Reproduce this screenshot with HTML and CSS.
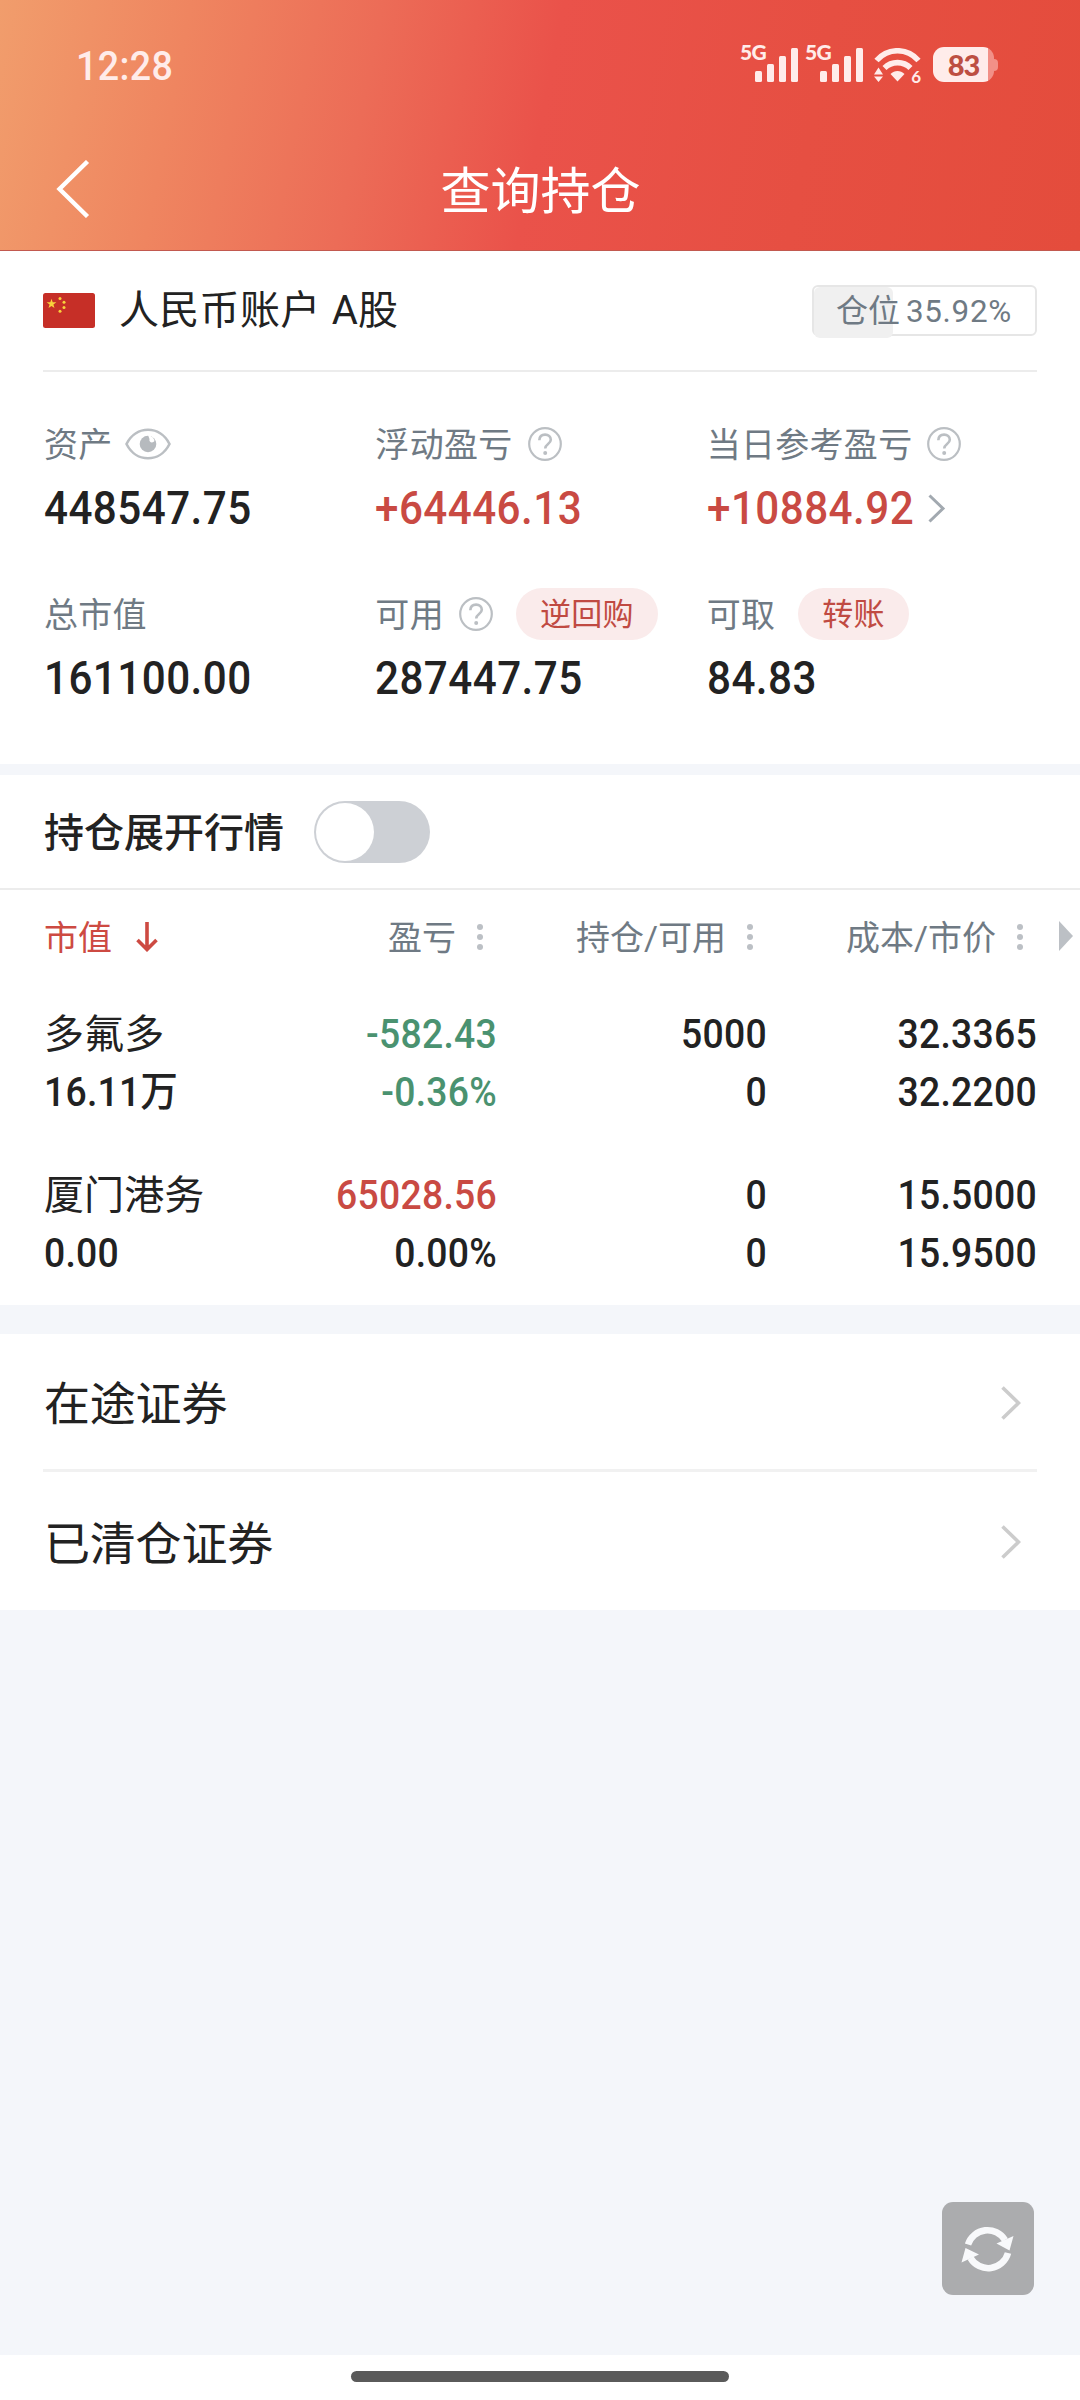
FILE: index.html
```html
<!DOCTYPE html>
<html lang="zh-CN">
<head>
<meta charset="utf-8">
<title>查询持仓</title>
<link rel="stylesheet" href="styles.css">
</head>
<body>
<svg class="defs" width="0" height="0">
  <symbol id="help" viewBox="0 0 34 34"><circle cx="17" cy="17" r="15.8" fill="none" stroke="#bbbfc3" stroke-width="2.2"/><path d="M11.3 13.2c.2-3.6 2.6-5.6 5.8-5.6s5.7 2 5.7 5.1c0 4.300-5.600 4.200-5.600 8.800" fill="none" stroke="#bbbfc3" stroke-width="2.600"/><circle cx="17.200" cy="26" r="2" fill="#bbbfc3"/></symbol>
  <symbol id="dots" viewBox="0 0 6 28"><g fill="#bcc0c5"><circle cx="3" cy="4" r="3"/><circle cx="3" cy="14" r="3"/><circle cx="3" cy="24" r="3"/></g></symbol>
  <symbol id="next" viewBox="0 0 20 34"><path d="M1.500 1.500 17.500 17 1.500 32.500" fill="none" stroke="#ccc" stroke-width="3.600"/></symbol>
  <symbol id="bars" viewBox="0 0 44 34"><g fill="#ffecea"><rect x="0" y="23" width="7" height="11" rx="1.500"/><rect x="12" y="16" width="7" height="18" rx="1.500"/><rect x="24" y="8" width="7" height="26" rx="1.500"/><rect x="36" y="0" width="7" height="34" rx="1.500"/></g></symbol>
</svg>
<div class="screen">
  <header class="top">
    <div class="status">
      <span class="time">12:28</span>
      <div class="indicators">
        <div class="signal"><span class="net">5G</span><svg class="bars"><use href="#bars"/></svg></div>
        <div class="signal"><span class="net">5G</span><svg class="bars"><use href="#bars"/></svg></div>
        <div class="wifi">
          <svg width="47" height="34" viewBox="0 0 47 34"><g fill="none" stroke="#ffecea" stroke-width="5.600"><path d="M2.500 12.500C14-.5 33-.5 44.500 12.500"/><path d="M10.500 20C17.500 12.800 29.500 12.800 36.500 20"/></g><path d="M16.500 26c4-4 10-4 14 0l-7 7.500z" fill="#ffecea"/><path d="M0 26.500 4.500 19.500 9 26.500zM0 28.500h9L4.500 34z" fill="#ffecea"/></svg>
          <span class="gen">6</span>
        </div>
        <div class="battery"><span class="level">83</span></div>
      </div>
    </div>
    <div class="navbar">
      <svg class="back" width="34" height="58" viewBox="0 0 34 58"><path d="M31.500 1.500 3.500 29 31.500 56.500" fill="none" stroke="#fff" stroke-width="4.400"/></svg>
      <h1 class="title">查询持仓</h1>
    </div>
  </header>

  <section class="account">
    <div class="account-head">
      <svg class="flag" width="52" height="35" viewBox="0 0 52 35"><rect width="52" height="35" rx="2.500" fill="#c62f27"/><g fill="#f8d23c"><path d="M8.500 5.800l1.200 3.500h3.700l-3 2.200 1.100 3.600-3-2.200-3 2.200 1.100-3.600-3-2.200h3.700z"/><circle cx="17" cy="5.500" r="1.500"/><circle cx="21" cy="9.200" r="1.500"/><circle cx="21" cy="14.600" r="1.500"/><circle cx="17" cy="18.200" r="1.500"/></g></svg>
      <h2 class="account-name">人民币账户 A股</h2>
      <div class="ratio"><span class="ratio-fill" style="width:35.92%"></span><span class="ratio-text">仓位 <span class="ratio-num">35.92%</span></span></div>
    </div>
    <div class="metrics">
      <div class="metric">
        <div class="label"><span>资产</span><svg class="eye" width="46" height="32" viewBox="0 0 46 32"><path d="M1.500 16C11-3 35-3 44.500 16 35 35 11 35 1.500 16z" fill="none" stroke="#bbbfc3" stroke-width="2.600"/><circle cx="23" cy="16" r="8.300" fill="#b6babe"/><path d="M23 7c4 1 6 3 6.500 6-1.500 2.500-6 1.500-5-2z" fill="#fff"/></svg></div>
        <div class="value"><span>448547.75</span></div>
      </div>
      <div class="metric">
        <div class="label"><span>浮动盈亏</span><svg class="help"><use href="#help"/></svg></div>
        <div class="value up"><span>+64446.13</span></div>
      </div>
      <div class="metric">
        <div class="label"><span>当日参考盈亏</span><svg class="help"><use href="#help"/></svg></div>
        <div class="value up"><span>+10884.92</span><svg class="more" width="18" height="29" viewBox="0 0 18 29"><path d="M1.500 1.500 15 14.500 1.500 27.500" fill="none" stroke="#a2a9b0" stroke-width="3"/></svg></div>
      </div>
      <div class="metric">
        <div class="label"><span>总市值</span></div>
        <div class="value"><span>161100.00</span></div>
      </div>
      <div class="metric">
        <div class="label"><span>可用</span><svg class="help"><use href="#help"/></svg><span class="pill">逆回购</span></div>
        <div class="value"><span>287447.75</span></div>
      </div>
      <div class="metric">
        <div class="label"><span>可取</span><span class="pill">转账</span></div>
        <div class="value"><span>84.83</span></div>
      </div>
    </div>
  </section>

  <section class="holdings">
    <div class="expand">
      <span class="expand-text">持仓展开行情</span>
      <span class="toggle"><span class="knob"></span></span>
    </div>
    <div class="grid head">
      <div class="cell first sorted"><span>市值</span><svg class="sort" width="22" height="30" viewBox="0 0 22 30"><path d="M11 0v27M1.500 18 11 27.500 20.500 18" fill="none" stroke="#cd4a42" stroke-width="3.600"/></svg></div>
      <div class="cell"><span>盈亏</span><svg class="dots"><use href="#dots"/></svg></div>
      <div class="cell"><span>持仓/可用</span><svg class="dots"><use href="#dots"/></svg></div>
      <div class="cell"><span>成本/市价</span><svg class="dots"><use href="#dots"/></svg></div>
      <svg class="scroll-hint" width="14" height="30" viewBox="0 0 14 30"><path d="M0 0 14 15 0 30z" fill="#bcc0c5"/></svg>
    </div>
    <div class="grid row">
      <div class="cell first"><span class="name">多氟多</span><span>16.11<b class="unit">万</b></span></div>
      <div class="cell down"><span>-582.43</span><span>-0.36%</span></div>
      <div class="cell"><span>5000</span><span>0</span></div>
      <div class="cell"><span>32.3365</span><span>32.2200</span></div>
    </div>
    <div class="grid row">
      <div class="cell first"><span class="name">厦门港务</span><span>0.00</span></div>
      <div class="cell"><span class="up">65028.56</span><span>0.00%</span></div>
      <div class="cell"><span>0</span><span>0</span></div>
      <div class="cell"><span>15.5000</span><span>15.9500</span></div>
    </div>
  </section>

  <nav class="links">
    <a class="link"><span>在途证券</span><svg class="next"><use href="#next"/></svg></a>
    <a class="link"><span>已清仓证券</span><svg class="next"><use href="#next"/></svg></a>
  </nav>

  <button class="refresh" aria-label="刷新">
    <svg width="54" height="48" viewBox="0 0 54 48"><g fill="none" stroke="#f8f9fb" stroke-width="6.600"><path d="M7 19.500A20.500 20.500 0 0 1 44 15"/><path d="M47 28A20.500 20.500 0 0 1 9.500 33"/></g><path d="M35.500 18.500 52.500 11 48.500 25.500zM18 29.500 4.500 23 .5 37.500z" fill="#f8f9fb"/></svg>
  </button>
  <footer class="home"><span class="home-bar"></span></footer>
</div>
</body>
</html>
```
FILE: styles.css
```css
* { box-sizing: border-box; }
body { margin: 0; font-family: Roboto, "Noto Sans CJK SC", sans-serif; color: #222; }
h1, h2 { margin: 0; font-weight: 400; }
svg { display: block; flex: none; }
.defs { position: absolute; }
.screen { position: relative; display: flex; flex-direction: column; width: 1080px; height: 2400px; background: #f4f6fa; overflow: hidden; }

.top { height: 251px; background: linear-gradient(101deg, #f19d6c 0%, #ef8560 17%, #ec6c57 34%, #ea524a 50%, #e64f42 74%, #e44c3c 100%); border-bottom: 1px solid #c2594f; color: #fff; }
.status { display: flex; justify-content: space-between; height: 130px; padding: 0 82px 0 76px; }
.time { margin-top: 43px; font-size: 40px; line-height: 47px; font-weight: 500; letter-spacing: 0.4px; transform: scaleX(0.94); transform-origin: left; color: #ffecea; }
.indicators { display: flex; padding-top: 43px; color: #ffecea; }
.signal { position: relative; width: 58px; height: 40px; margin-right: 7px; padding: 5px 0 0 14px; }
.net { position: absolute; left: -1px; top: -2px; font: 900 21px/21px Lato, sans-serif; letter-spacing: -0.8px; }
.bars { width: 44px; height: 34px; }
.wifi { position: relative; width: 47px; margin: 5px 0 0 3px; }
.gen { position: absolute; right: 0; top: 19px; font: 700 17px/20px Lato, sans-serif; }
.battery { position: relative; width: 61px; height: 35px; margin: 4px 4px 0 12px; border-radius: 11px; background: linear-gradient(90deg, #ffecea 55px, #f29087 55px); }
.battery::after { content: ""; position: absolute; left: 61px; top: 12px; width: 4px; height: 12px; border-radius: 0 4px 4px 0; background: #f29087; }
.level { display: block; text-align: center; font: 900 29px/35px Lato, sans-serif; letter-spacing: -1px; color: #bd4f42; }
.navbar { display: flex; align-items: center; height: 120px; padding: 0 56px; }
.back { margin-bottom: 3px; }
.title { flex: 1; margin: 3px 33px 0 0; text-align: center; font-size: 50px; line-height: 60px; }

.account { height: 513px; padding: 0 43px; background: #fff; }
.account-head { display: flex; align-items: center; height: 121px; border-bottom: 2px solid #ececec; }
.account-name { flex: 1; margin-left: 24px; font-size: 40px; line-height: 50px; letter-spacing: 0.3px; word-spacing: 1px; }
.ratio { position: relative; width: 225px; height: 51px; border: 2px solid #e6e6e6; border-radius: 6px; font-size: 32px; color: #6f7a84; }
.ratio-fill { position: absolute; left: 0; top: 0; height: 51px; border-radius: 6px; background: #f0f0f0; }
.ratio-text { position: relative; display: block; padding-left: 22px; line-height: 49px; white-space: nowrap; }
.ratio-num { display: inline-block; margin-left: -2px; letter-spacing: 0.7px; transform: scaleX(0.98); transform-origin: left; }
.metrics { display: grid; grid-template-columns: repeat(3, 1fr); grid-auto-rows: 170px; padding-top: 45px; }
.label { display: flex; align-items: center; height: 54px; padding-left: 1px; font-size: 34px; letter-spacing: 0.3px; white-space: nowrap; color: #6f7a84; }
.label > span:first-child { padding-bottom: 4px; }
.help { width: 34px; height: 34px; margin-left: 15px; }
.eye { margin-left: 12px; }
.pill { height: 52px; margin-left: 23px; padding: 0 24px; border-radius: 26px; background: #faebeb; font-size: 31px; line-height: 53px; color: #c04a42; }
.value { display: flex; align-items: center; height: 64px; margin-top: 5px; padding-left: 1px; font-size: 46px; font-weight: 500; letter-spacing: 0.5px; }
.value span { transform: scaleX(0.917); transform-origin: left; }
.more { margin-left: -5px; }
.up { color: #c94a43; }
.down { color: #4a9270; }

.holdings { height: 530px; margin-top: 11px; background: #fff; }
.expand { display: flex; align-items: center; height: 115px; padding: 0 44px; border-bottom: 2px solid #ececec; font-size: 40px; font-weight: 500; }
.expand-text { padding-bottom: 4px; }
.toggle { width: 116px; height: 62px; margin-left: 30px; padding: 2px; border-radius: 31px; background: #cdd0d5; }
.knob { display: block; width: 58px; height: 58px; border-radius: 50%; background: #fff; }
.grid { position: relative; display: grid; grid-template-columns: 183px 270px 270px 270px; padding-left: 44px; }
.cell { text-align: right; }
.cell.first { text-align: left; }
.head { height: 94px; font-size: 34px; color: #6f7a84; }
.head .cell { display: flex; align-items: center; justify-content: flex-end; }
.head .cell span { padding-bottom: 4px; }
.head .first { justify-content: flex-start; }
.head .sorted { color: #cd4a42; }
.sort { margin-left: 24px; }
.dots { width: 6px; height: 28px; margin: 0 14px 0 21px; }
.scroll-hint { position: absolute; left: 1059px; top: 31px; }
.row { height: 161px; padding-top: 21px; font-size: 41px; font-weight: 500; letter-spacing: 0.3px; }
.row span { display: block; height: 58px; line-height: 58px; transform: scaleX(0.91); transform-origin: right; }
.row .first span { transform-origin: left; }
.row .first .name { padding-top: 1px; font-size: 40px; font-weight: 400; letter-spacing: 0.100px; transform: none; }
.unit { font-size: 41px; font-weight: 500; }

.links { margin-top: 29px; padding: 0 43px; background: #fff; }
.link { display: flex; align-items: center; justify-content: space-between; height: 138px; padding: 2px 16px 0 1px; font-size: 46px; letter-spacing: -0.2px; }
.link span { padding-bottom: 5px; }
.link:first-child { border-bottom: 3px solid #f1f1f1; }
.next { width: 20px; height: 34px; }

.refresh { position: absolute; left: 942px; top: 2202px; display: flex; align-items: center; justify-content: center; width: 92px; height: 93px; padding: 0; border: 0; border-radius: 11px; background: #abacae; }
.home { display: flex; justify-content: center; height: 45px; margin-top: auto; padding-top: 16px; background: #fff; }
.home-bar { width: 378px; height: 11px; border-radius: 6px; background: #5a5a5a; }
```
